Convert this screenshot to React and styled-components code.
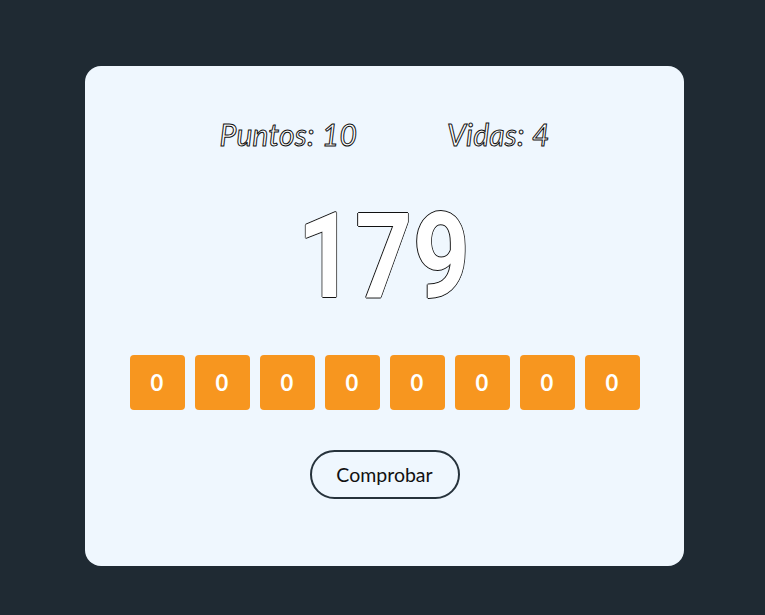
import styled, { createGlobalStyle } from "styled-components";

const GlobalStyle = createGlobalStyle`
  html, body {
    margin: 0;
    padding: 0;
    background: #1f2a33;
    font-family: "Lato", "Open Sans", sans-serif;
  }
`;

const Page = styled.main`
  min-height: 615px;
  display: flex;
  justify-content: center;
  align-items: flex-start;
  padding: 66px 0 0 4px;
  box-sizing: border-box;
`;

const Card = styled.section`
  width: 599px;
  height: 500px;
  box-sizing: border-box;
  background: #eff7fe;
  border-radius: 16px;
  display: flex;
  flex-direction: column;
  align-items: center;
  padding-top: 50px;
`;

const Stats = styled.div`
  display: flex;
  gap: 90px;
  justify-content: center;
`;

const Stat = styled.span`
  font-size: 30px;
  font-style: italic;
  color: #ffffff;
  -webkit-text-stroke: 1px #111;
  line-height: 36px;
  letter-spacing: 0.2px;
`;

const Target = styled.div`
  margin-top: 40px;
  font-family: "Roboto", sans-serif;
  font-size: 118px;
  line-height: 130px;
  font-weight: 700;
  color: #ffffff;
  text-shadow:
    1px 0 0 #111, -1px 0 0 #111, 0 1px 0 #111, 0 -1px 0 #111;
  letter-spacing: 1px;
  transform: scaleX(0.84);
`;

const Bits = styled.div`
  margin-top: 33px;
  display: flex;
  gap: 10px;
`;

const Bit = styled.button`
  width: 55px;
  height: 55px;
  border: none;
  border-radius: 4px;
  background: #f7961f;
  color: #ffffff;
  font-family: "Lato", sans-serif;
  font-size: 22px;
  font-weight: 700;
  display: flex;
  align-items: center;
  justify-content: center;
  padding: 0;
`;

const CheckButton = styled.button`
  margin-top: 40px;
  width: 150px;
  height: 49px;
  border: 2px solid #26323b;
  border-radius: 25px;
  background: transparent;
  color: #111;
  font-family: "Lato", sans-serif;
  font-size: 19.5px;
  padding: 0;
`;

export default function App() {
  const bits = [0, 0, 0, 0, 0, 0, 0, 0];
  return (
    <>
      <GlobalStyle />
      <Page>
        <Card>
          <Stats>
            <Stat>Puntos: 10</Stat>
            <Stat>Vidas: 4</Stat>
          </Stats>
          <Target>179</Target>
          <Bits>
            {bits.map((b, i) => (
              <Bit key={i}>{b}</Bit>
            ))}
          </Bits>
          <CheckButton>Comprobar</CheckButton>
        </Card>
      </Page>
    </>
  );
}
